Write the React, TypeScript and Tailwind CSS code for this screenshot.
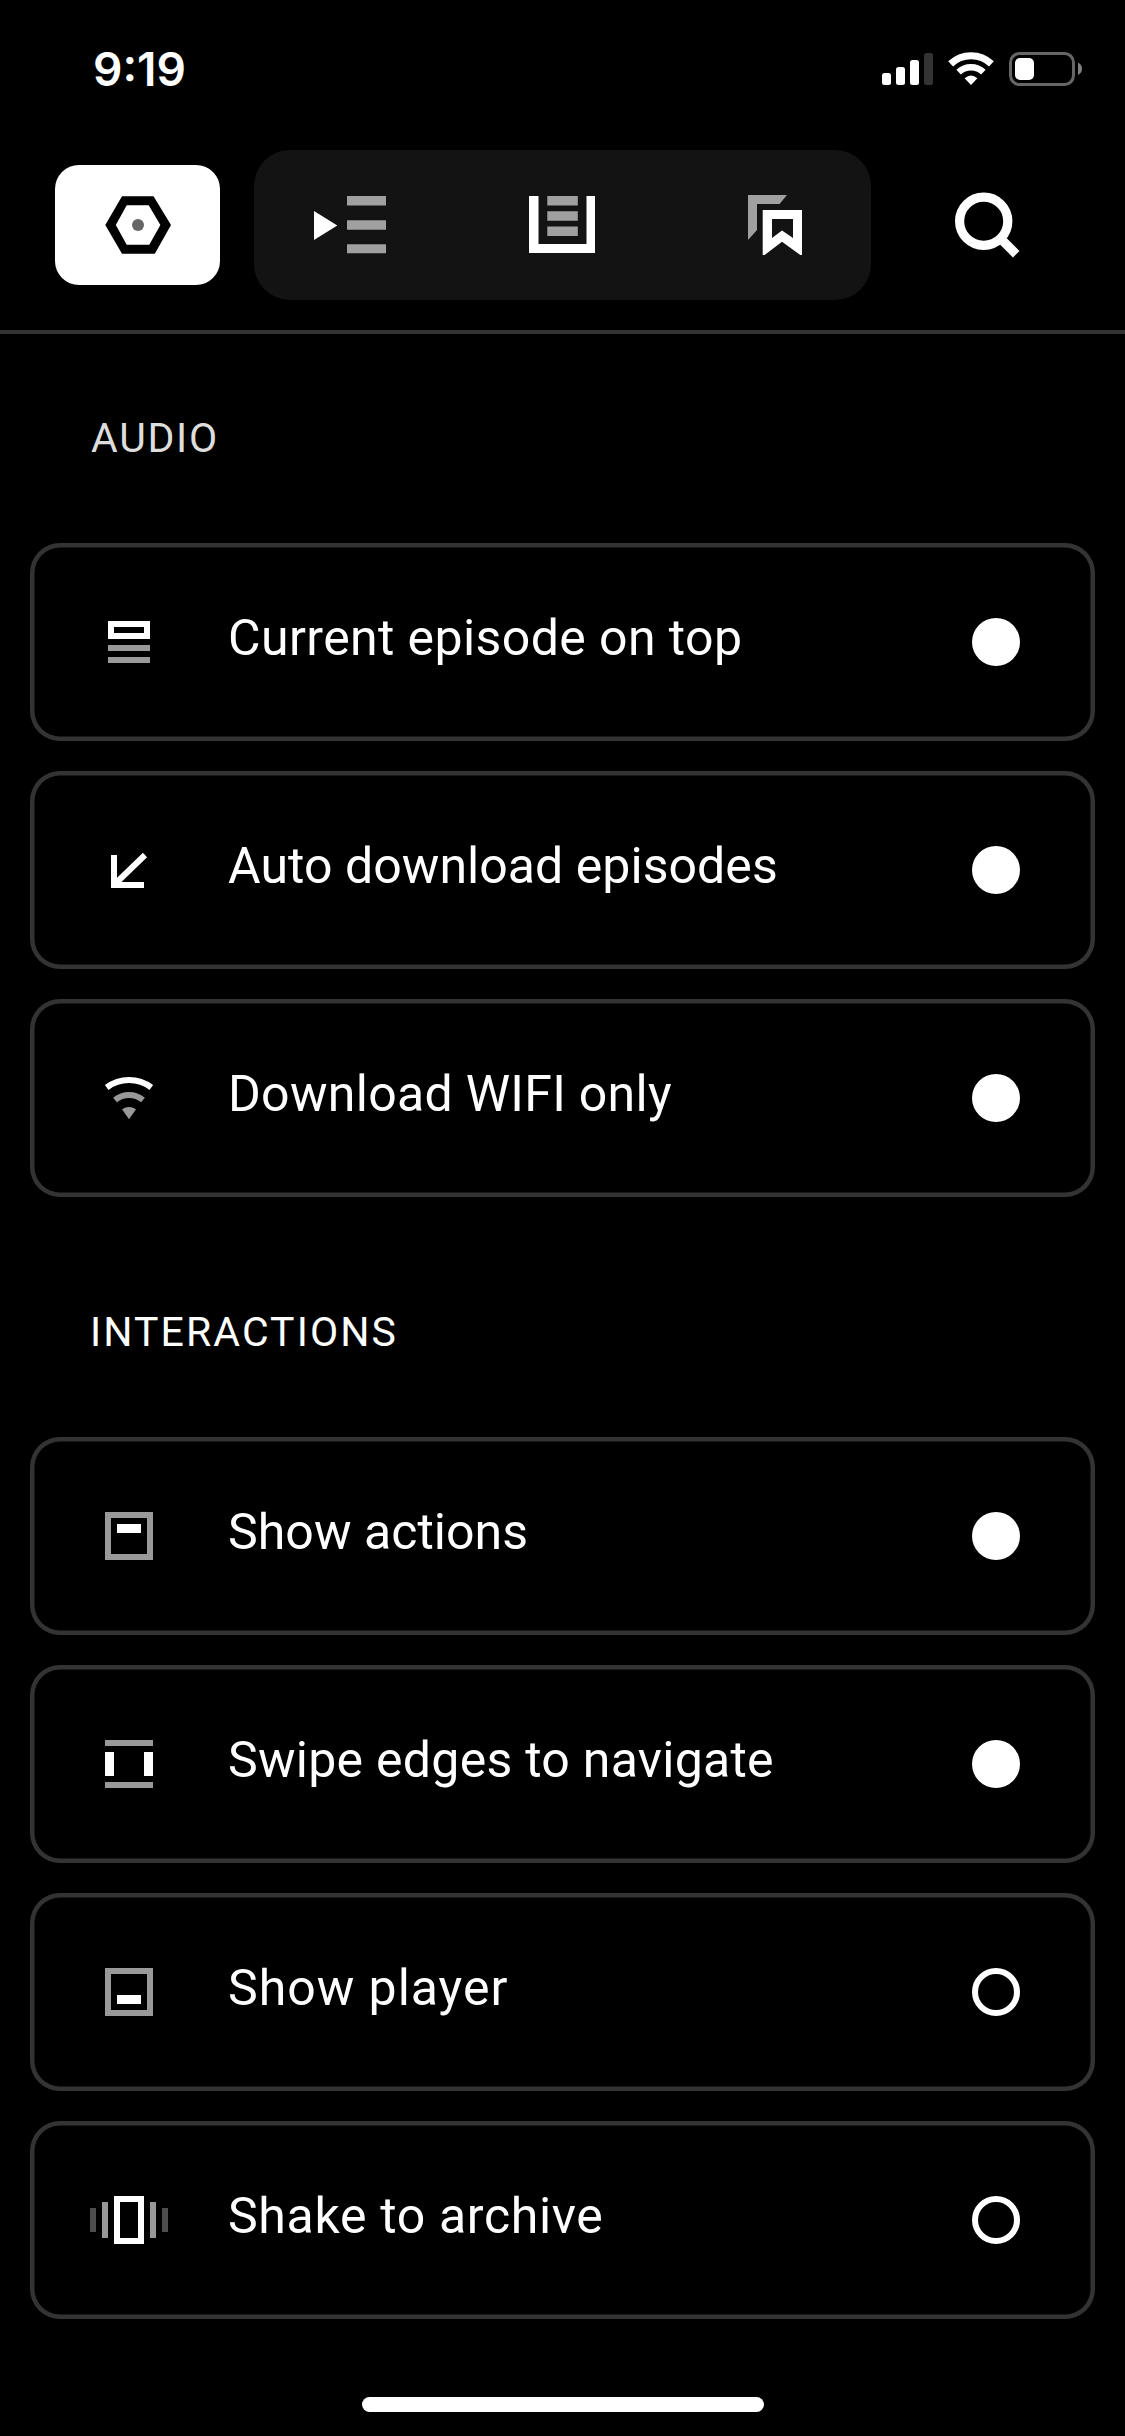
import type { ReactNode } from "react";

const GREY = "#999";

type Setting = { label: string; tracking: string; icon: ReactNode; on: boolean };

// Row glyphs share an 84x48 canvas so that they line up on one centre.
function Glyph({ children }: { children: ReactNode }) {
  return (
    <svg className="h-12 w-[84px] shrink-0" viewBox="0 0 84 48" fill="none" aria-hidden="true">
      {children}
    </svg>
  );
}

const audio: Setting[] = [
  {
    label: "Current episode on top",
    tracking: "tracking-[0.4px]",
    on: true,
    icon: (
      <Glyph>
        <rect x="24" y="6" width="36" height="12" stroke="#fff" strokeWidth="6" />
        <rect x="21" y="27" width="42" height="6" fill={GREY} />
        <rect x="21" y="39" width="42" height="6" fill={GREY} />
      </Glyph>
    ),
  },
  {
    label: "Auto download episodes",
    tracking: "tracking-[0.05px]",
    on: true,
    icon: (
      <Glyph>
        <path d="M27 9V39H57" stroke="#fff" strokeWidth="6" />
        <path d="M28 38L58 9" stroke="#fff" strokeWidth="6" />
      </Glyph>
    ),
  },
  {
    label: "Download WIFI only",
    tracking: "tracking-[0.3px]",
    on: true,
    icon: (
      <Glyph>
        <path d="M19.7 13.5A37 37 0 0 1 64.3 13.5" stroke="#fff" strokeWidth="6" />
        <path d="M28 26A22 22 0 0 1 56 26" stroke={GREY} strokeWidth="6" />
        <path d="M35 35.2Q42 31 49 35.2L42 45.3Z" fill={GREY} />
      </Glyph>
    ),
  },
];

const interactions: Setting[] = [
  {
    label: "Show actions",
    tracking: "tracking-[0.05px]",
    on: true,
    icon: (
      <Glyph>
        <rect x="21" y="3" width="42" height="42" stroke={GREY} strokeWidth="6" />
        <rect x="30" y="12" width="24" height="9" fill="#fff" />
      </Glyph>
    ),
  },
  {
    label: "Swipe edges to navigate",
    tracking: "tracking-[0.27px]",
    on: true,
    icon: (
      <Glyph>
        <rect x="18" y="0" width="48" height="6" fill={GREY} />
        <rect x="18" y="42" width="48" height="6" fill={GREY} />
        <rect x="18" y="12" width="9" height="24" fill="#fff" />
        <rect x="57" y="12" width="9" height="24" fill="#fff" />
      </Glyph>
    ),
  },
  {
    label: "Show player",
    tracking: "tracking-[0.98px]",
    on: false,
    icon: (
      <Glyph>
        <rect x="21" y="3" width="42" height="42" stroke={GREY} strokeWidth="6" />
        <rect x="30" y="27" width="24" height="9" fill="#fff" />
      </Glyph>
    ),
  },
  {
    label: "Shake to archive",
    tracking: "tracking-[0.66px]",
    on: false,
    icon: (
      <Glyph>
        <rect x="30" y="3" width="24" height="42" stroke="#fff" strokeWidth="6" />
        <rect x="15" y="6" width="6" height="36" fill={GREY} />
        <rect x="63" y="6" width="6" height="36" fill={GREY} />
        <rect x="3" y="12" width="6" height="24" fill="#4d4d4d" />
        <rect x="75" y="12" width="6" height="24" fill="#4d4d4d" />
      </Glyph>
    ),
  },
];

function SettingCard({ label, tracking, icon, on }: Setting) {
  return (
    <button
      role="switch"
      aria-checked={on}
      className="flex h-[198px] w-full items-center rounded-[30px] pr-[75px] pl-[57px] text-left shadow-[inset_0_0_0_4.5px_#333]"
    >
      {icon}
      <span className={`grow pb-[9px] pl-[57px] text-[50px] leading-[60px] whitespace-nowrap ${tracking}`}>{label}</span>
      <span className={on ? "size-12 rounded-full bg-white" : "size-12 rounded-full border-[6px] border-white"} />
    </button>
  );
}

function Section({ title, titleClass, settings }: { title: string; titleClass: string; settings: Setting[] }) {
  return (
    <section className="px-[30px]">
      <h2 className={`flex h-[209px] items-center pb-[2px] text-[41px] leading-[50px] ${titleClass}`}>{title}</h2>
      <div className="flex flex-col gap-[30px]">
        {settings.map((s) => (
          <SettingCard key={s.label} {...s} />
        ))}
      </div>
    </section>
  );
}

function StatusBar() {
  return (
    <div className="flex h-[150px] items-start justify-between pr-[42px] pl-[93px]">
      <span className="mt-[41px] font-[Inter] text-[46px] leading-[56px] font-semibold tracking-[0px]">9:19</span>
      <svg className="mt-[50px] h-10 w-[202px]" viewBox="881 50 202 40" fill="#fff" aria-hidden="true">
        <rect x="882" y="73" width="9" height="12" rx="2.5" />
        <rect x="896" y="67" width="9" height="18" rx="2.5" />
        <rect x="910" y="60" width="9" height="25" rx="2.5" />
        <rect x="924" y="53" width="9" height="32" rx="2.5" fill="#333" />
        <path d="M950.6 63.6A29.5 29.5 0 0 1 991.4 63.6" fill="none" stroke="#fff" strokeWidth="7" transform="translate(0 .3)" />
        <path d="M958.6 71.6A18.3 18.3 0 0 1 983.4 71.6" fill="none" stroke="#fff" strokeWidth="6.6" transform="translate(0 .5)" />
        <path d="M964.6 78.2Q971 72.8 977.4 78.2L971 85Z" />
        <rect x="1010.5" y="53.5" width="63" height="31" rx="9" fill="none" stroke="#666" strokeWidth="3" />
        <rect x="1015" y="58" width="19" height="22" rx="5" />
        <path d="M1078 62.5Q1082 64.5 1082 68.8T1078 75Z" fill="#808080" />
      </svg>
    </div>
  );
}

function Header() {
  return (
    <header className="flex h-[184px] items-start border-b-4 border-[#333] pl-[55px]">
      <button aria-label="Settings" className="mt-[15px] flex h-[120px] w-[165px] items-center justify-center rounded-3xl bg-white">
        <svg className="h-[60px] w-[68px]" viewBox="104 195 68 60" aria-hidden="true">
          <path
            fillRule="evenodd"
            d="M105.3 225L122 196.3H153.5L171 225L154.8 253.7H122ZM115.8 225L126.7 244.7H149.3L160.4 225L148.7 205.3H126.7Z"
          />
          <circle cx="138" cy="225" r="6" fill="#666" />
        </svg>
      </button>
      <nav className="ml-[34px] flex h-[150px] w-[617px] items-center rounded-[36px] bg-[#131313] pl-[59px]">
        <svg className="h-[60px] w-[74px]" viewBox="313 195 74 60" aria-hidden="true">
          <path d="M314 211L337.3 225.5L314 240Z" fill="#fff" />
          <path d="M347 196h39v9.5h-39zM347 220.3h39v9.4h-39zM347 244.3h39v9h-39z" fill="#a0a0a0" />
        </svg>
        <svg className="ml-[142px] h-[60px] w-[66px]" viewBox="533 195 66 60" aria-hidden="true">
          <path d="M533 196h9.5v48h48v-48h8.5v57h-66z" fill="#fff" />
          <path d="M551.3 196h30.5v9.5h-30.5zM551.3 211.2h30.5v9.5h-30.5zM551.3 226.4h30.5v9.5h-30.5z" fill="#a0a0a0" />
        </svg>
        <svg className="ml-[152px] h-[62px] w-[56px]" viewBox="747 194 56 62" aria-hidden="true">
          <path d="M748 195H787L779.5 204H757V230L748 240Z" fill="#a0a0a0" />
          <path
            fillRule="evenodd"
            d="M762.7 210H802V255H800.3L782 241.7L764.6 255H762.7ZM772 219V238L782 230.5L793 238V219Z"
            fill="#fff"
          />
        </svg>
      </nav>
      <button aria-label="Search" className="mt-[41px] ml-[83px]">
        <svg className="h-[68px] w-[68px]" viewBox="954 191 68 68" fill="none" stroke="#fff" strokeWidth="9.2" aria-hidden="true">
          <circle cx="983.7" cy="221.3" r="24.1" />
          <path d="M1000.5 238.5L1016.2 254.2" />
        </svg>
      </button>
    </header>
  );
}

export default function App() {
  return (
    <main className="flex h-[2436px] w-[1125px] flex-col overflow-hidden bg-black font-[Roboto,sans-serif] text-white">
      <StatusBar />
      <Header />
      <div className="flex flex-col gap-[31px]">
        <Section title="AUDIO" titleClass="pl-[61px] tracking-[1.74px] text-[#ddd]" settings={audio} />
        <Section title="INTERACTIONS" titleClass="pl-[60px] tracking-[2.09px]" settings={interactions} />
      </div>
      <div className="mt-auto mb-6 h-[15px] w-[402px] self-center rounded-full bg-white" />
    </main>
  );
}
